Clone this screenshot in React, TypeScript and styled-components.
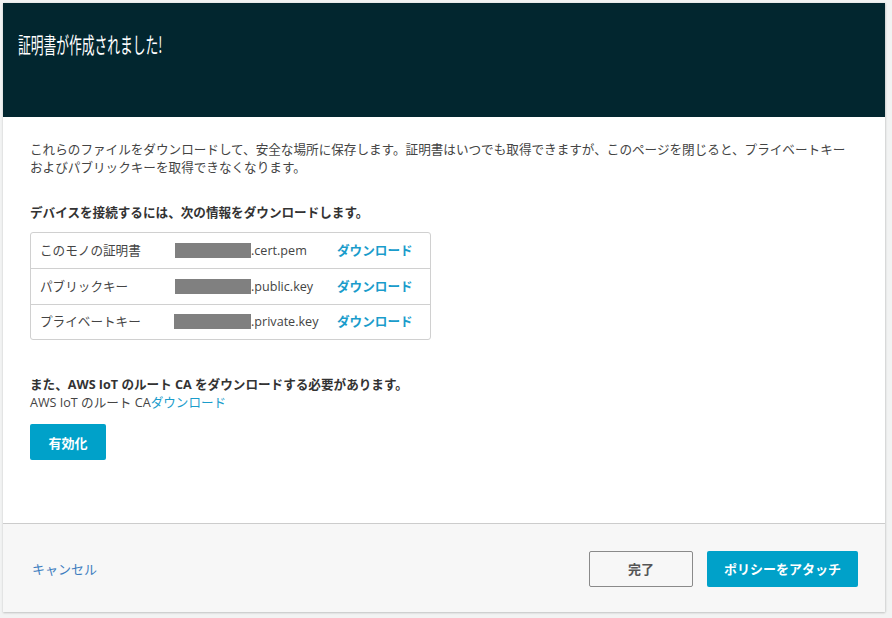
import React from "react";
import styled, { createGlobalStyle } from "styled-components";

const Global = createGlobalStyle`
  html, body { margin: 0; padding: 0; background: #f2f3f3; }
  body {
    font-family: "Open Sans", "Noto Sans CJK JP", sans-serif;
    color: #444;
  }
  * { box-sizing: border-box; }
`;

const Page = styled.div`
  padding: 3px;
  width: 888px;
`;

const Card = styled.div`
  width: 882px;
  background: #fff;
  box-shadow: 0 1px 2px rgba(0, 0, 0, 0.18), 1px 0 2px rgba(0, 0, 0, 0.08);
`;

const Header = styled.div`
  height: 114px;
  background: #02262f;
  padding: 27px 15px 0;
`;

const Title = styled.h1`
  margin: 0;
  display: inline-block;
  font-family: "Noto Sans CJK JP", sans-serif;
  font-weight: 400;
  font-size: 22px;
  line-height: 26px;
  color: #fff;
  transform: scaleX(0.58);
  transform-origin: left center;
  white-space: nowrap;
`;

const Body = styled.div`
  padding: 24px 27px 63px;
  font-size: 12.6px;
  line-height: 18px;
`;

const Para = styled.p`
  margin: 0;
  max-width: 825px;
  color: #444;
`;

const SectionHead = styled.div<{ $top: number }>`
  margin-top: ${(p) => p.$top}px;
  font-weight: 700;
  color: #333;
`;

const Table = styled.div`
  margin-top: 10px;
  width: 401px;
  border: 1px solid #d0d0d0;
  border-radius: 3px;
`;

const Row = styled.div`
  display: grid;
  grid-template-columns: 135px 162px 1fr;
  align-items: center;
  height: 35.4px;
  padding-left: 9px;
  & + & {
    border-top: 1px solid #d0d0d0;
  }
`;

const Cell = styled.div`
  color: #444;
  white-space: nowrap;
  display: flex;
  align-items: center;
`;

const Redacted = styled.span<{ $w: number; $shift: number }>`
  display: inline-block;
  width: ${(p) => p.$w}px;
  margin-left: ${(p) => p.$shift}px;
  height: 15px;
  background: #808080;
`;

const DownloadLink = styled.a<{ $bold?: boolean }>`
  color: #1a9ccb;
  font-weight: ${(p) => (p.$bold ? 700 : 400)};
  text-decoration: none;
  cursor: pointer;
`;

const Line = styled.div`
  color: #444;
  line-height: 17px;
`;

const PrimaryButton = styled.button<{ $w: number }>`
  width: ${(p) => p.$w}px;
  height: 36px;
  border: none;
  border-radius: 2px;
  background: #00a1c9;
  color: #fff;
  font-family: "Noto Sans CJK JP", sans-serif;
  font-weight: 700;
  font-size: 13px;
  cursor: pointer;
`;

const ActivateWrap = styled.div`
  margin-top: 13px;
  line-height: 0;
`;

const Footer = styled.div`
  height: 89px;
  border-top: 1px solid #cccccc;
  background: #f7f7f7;
  display: flex;
  align-items: center;
  padding: 0 27px 0 29px;
`;

const Cancel = styled.a`
  color: #3f7ec0;
  font-family: "Noto Sans CJK JP", sans-serif;
  font-size: 13px;
  cursor: pointer;
`;

const Spacer = styled.div`
  flex: 1;
`;

const Actions = styled.div`
  display: flex;
  gap: 14px;
  margin-top: 1px;
`;

const SecondaryButton = styled.button`
  width: 104px;
  height: 36px;
  border: 1px solid #8a8a8a;
  border-radius: 2px;
  background: transparent;
  color: #555;
  font-family: "Noto Sans CJK JP", sans-serif;
  font-weight: 700;
  font-size: 13px;
  cursor: pointer;
`;

const files = [
  { label: "このモノの証明書", w: 76, shift: 0, name: ".cert.pem" },
  { label: "パブリックキー", w: 76, shift: 0, name: ".public.key" },
  { label: "プライベートキー", w: 77, shift: -1, name: ".private.key" },
];

export default function App() {
  return (
    <>
      <Global />
      <Page>
        <Card>
          <Header>
            <Title>証明書が作成されました!</Title>
          </Header>
          <Body>
            <Para>
              これらのファイルをダウンロードして、安全な場所に保存します。証明書はいつでも取得できますが、このページを閉じると、プライベートキーおよびパブリックキーを取得できなくなります。
            </Para>
            <SectionHead $top={27}>
              デバイスを接続するには、次の情報をダウンロードします。
            </SectionHead>
            <Table>
              {files.map((f) => (
                <Row key={f.name}>
                  <Cell>{f.label}</Cell>
                  <Cell>
                    <Redacted $w={f.w} $shift={f.shift} />
                    {f.name}
                  </Cell>
                  <Cell>
                    <DownloadLink $bold>ダウンロード</DownloadLink>
                  </Cell>
                </Row>
              ))}
            </Table>
            <SectionHead $top={36}>
              また、AWS IoT のルート CA をダウンロードする必要があります。
            </SectionHead>
            <Line>
              AWS IoT のルート CA<DownloadLink>ダウンロード</DownloadLink>
            </Line>
            <ActivateWrap>
              <PrimaryButton $w={76}>有効化</PrimaryButton>
            </ActivateWrap>
          </Body>
          <Footer>
            <Cancel>キャンセル</Cancel>
            <Spacer />
            <Actions>
              <SecondaryButton>完了</SecondaryButton>
              <PrimaryButton $w={151}>ポリシーをアタッチ</PrimaryButton>
            </Actions>
          </Footer>
        </Card>
      </Page>
    </>
  );
}
